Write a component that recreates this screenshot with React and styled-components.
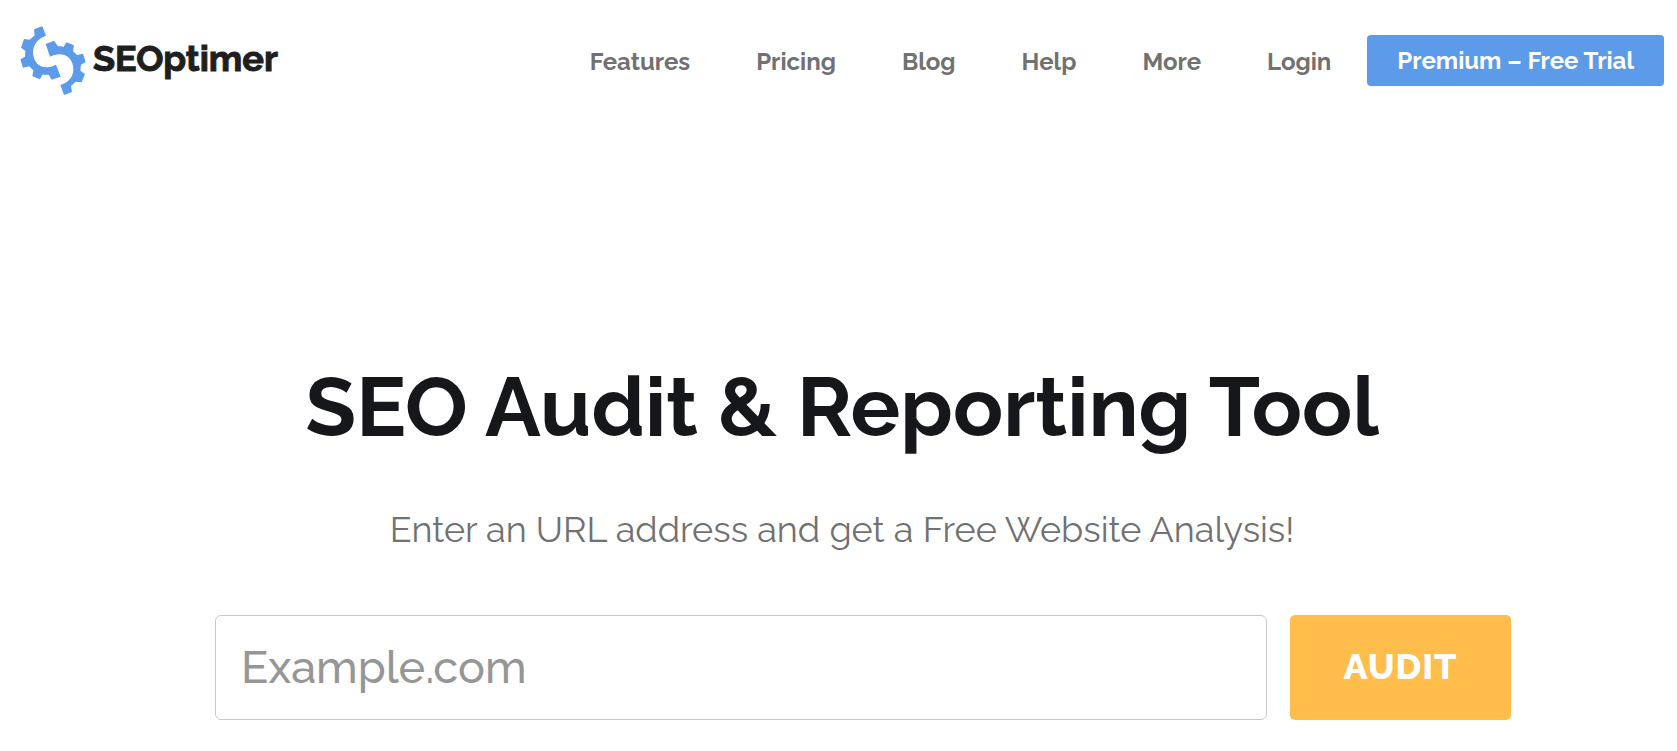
import React from 'react';
import styled, { createGlobalStyle } from 'styled-components';

const GlobalStyle = createGlobalStyle`
  * {
    box-sizing: border-box;
  }

  body {
    margin: 0;
    background-color: #fff;
    font-family: Raleway, Lato, 'Open Sans', sans-serif;
  }
`;

const Header = styled.header`
  display: flex;
  align-items: center;
  justify-content: space-between;
  padding: 26px 13px 26px 20px;
`;

const Logo = styled.a`
  display: flex;
  align-items: center;
  gap: 7px;
  color: #1f1f1f;
  text-decoration: none;
`;

const LogoMark = styled.svg`
  width: 66px;
  height: 70px;
  fill: #5c9aea;
`;

const LogoText = styled.span`
  font-size: 36px;
  font-weight: 700;
  line-height: 40px;
  padding-bottom: 6px;
  -webkit-text-stroke: 1px #1f1f1f;
`;

const Nav = styled.nav`
  display: flex;
  align-items: center;
  gap: 36px;
  padding-bottom: 2px;
`;

const NavList = styled.ul`
  display: flex;
  gap: 66px;
  margin: 0;
  padding: 4px 0 0;
  list-style: none;
`;

const NavLink = styled.a`
  color: #717171;
  font-size: 24px;
  font-weight: 700;
  line-height: 32px;
  text-decoration: none;
`;

const TrialLink = styled.a`
  padding: 10px 30px;
  border-radius: 4px;
  background-color: #5c9aea;
  color: #fff;
  font-size: 24px;
  font-weight: 700;
  line-height: 31px;
  text-decoration: none;
`;

const Hero = styled.main`
  padding: 235px 166px 30px 173px;
  text-align: center;
`;

const Title = styled.h1`
  margin: 0;
  color: #15171b;
  font-size: 83px;
  font-weight: 700;
  line-height: 100px;
`;

const Subtitle = styled.p`
  margin: 48px 0 62px;
  color: #717171;
  font-size: 36px;
  font-weight: 400;
  line-height: 48px;
`;

const AuditForm = styled.form`
  display: flex;
  gap: 23px;
  padding-left: 42px;
`;

const UrlInput = styled.input`
  flex: 1;
  min-width: 0;
  height: 105px;
  padding: 0 25px;
  border: 1px solid #c8c8c8;
  border-radius: 6px;
  color: #333;
  font-family: inherit;
  font-size: 45px;
  font-weight: 500;

  &::placeholder {
    color: #969696;
    opacity: 1;
  }
`;

const AuditButton = styled.button`
  width: 221px;
  padding-bottom: 4px;
  border: 0;
  border-radius: 5px;
  background-color: #ffbd4c;
  color: #fff;
  font-family: inherit;
  font-size: 36px;
  font-weight: 800;
  letter-spacing: 1px;
`;

const links = ['Features', 'Pricing', 'Blog', 'Help', 'More', 'Login'];

const GearLogo = () => (
  <LogoMark viewBox="29 35 198 210" aria-hidden="true">
    <path d="M96 36 L107 64 C82 72 68 92 68 114 C68 141 86 159 108 159 C118 159 127 156 137 151 L151 187 L124 196 L115 181 L96 181 L89 195 L66 186 L69 168 L56 156 L38 160 L30 135 L44 127 L45 109 L32 100 L41 74 L58 76 L73 63 L71 45 Z" />
    <path d="M106 89 L131 79 L142 95 L160 97 L168 84 L191 93 L188 111 L200 122 L218 118 L226 143 L212 151 L210 169 L224 179 L214 204 L196 202 L182 215 L185 233 L161 242 L150 212 C176 204 189 187 189 164 C189 138 171 120 148 120 C137 120 128 123 119 127 Z" />
  </LogoMark>
);

const App = () => (
  <>
    <GlobalStyle />
    <Header>
      <Logo href="/">
        <GearLogo />
        <LogoText>SEOptimer</LogoText>
      </Logo>
      <Nav>
        <NavList>
          {links.map((link) => (
            <li key={link}>
              <NavLink href={`#${link.toLowerCase()}`}>{link}</NavLink>
            </li>
          ))}
        </NavList>
        <TrialLink href="#premium">Premium – Free Trial</TrialLink>
      </Nav>
    </Header>
    <Hero>
      <Title>SEO Audit &amp; Reporting Tool</Title>
      <Subtitle>Enter an URL address and get a Free Website Analysis!</Subtitle>
      <AuditForm onSubmit={(e) => e.preventDefault()}>
        <UrlInput type="text" placeholder="Example.com" aria-label="Website URL" />
        <AuditButton type="submit">AUDIT</AuditButton>
      </AuditForm>
    </Hero>
  </>
);

export default App;
